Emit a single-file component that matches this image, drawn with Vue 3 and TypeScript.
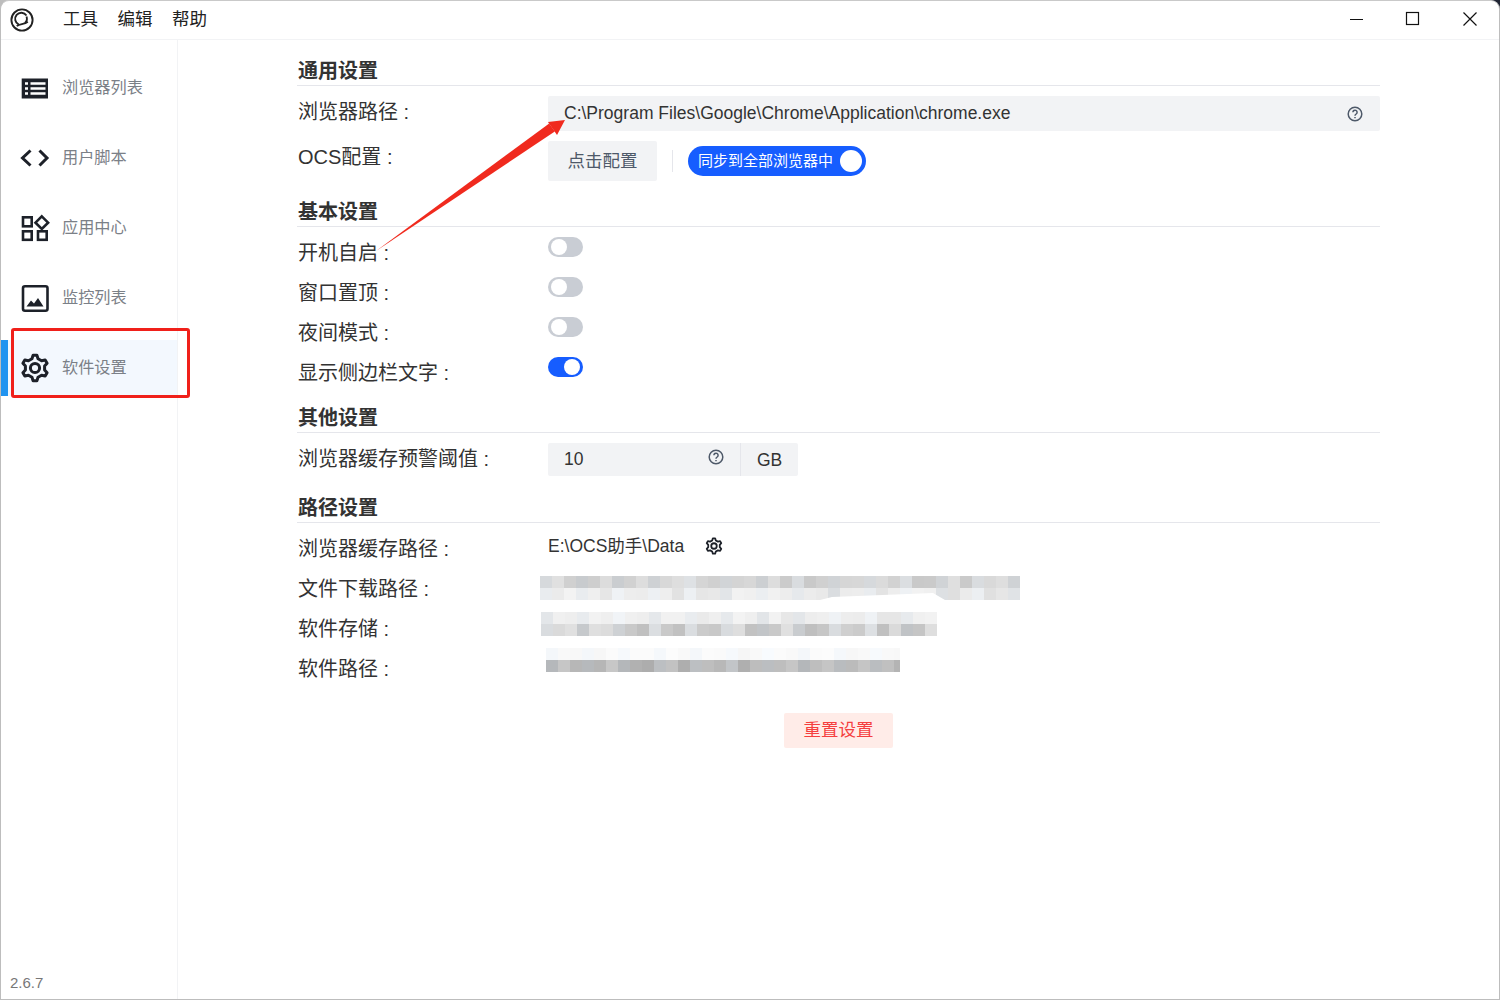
<script setup lang="ts">
function gearPath(cx: number, cy: number, teeth: number, outer: number, inner: number): string {
  const step = (Math.PI * 2) / teeth;
  const pts: string[] = [];
  for (let i = 0; i < teeth; i++) {
    const a = i * step - Math.PI / 2;
    const list: [number, number][] = [
      [inner, a - step * 0.3],
      [outer, a - step * 0.14],
      [outer, a + step * 0.14],
      [inner, a + step * 0.3],
    ];
    for (const [r, t] of list) {
      pts.push(`${(cx + r * Math.cos(t)).toFixed(2)} ${(cy + r * Math.sin(t)).toFixed(2)}`);
    }
  }
  return 'M' + pts.join('L') + 'Z';
}
const gear = gearPath(15, 15, 6, 13, 9.8);

function noiseRow(count: number, seed: number, base: number, range: number): string[] {
  const out: string[] = [];
  let s = seed;
  for (let i = 0; i < count; i++) {
    s = (s * 9301 + 49297) % 233280;
    const v = Math.round(base + (s / 233280 - 0.5) * range);
    const cool = i % 3 === 0 ? 3 : 0;
    out.push(`rgb(${v - cool},${v},${v + cool})`);
  }
  return out;
}

const blur1 = [noiseRow(40, 11, 213, 26), noiseRow(40, 37, 232, 22)];
const blur2 = [noiseRow(33, 73, 236, 16), noiseRow(33, 91, 208, 36)];
const blur3 = [noiseRow(30, 123, 249, 6), noiseRow(30, 157, 185, 28)];

const nav = [
  { label: '浏览器列表', icon: 'list', active: false },
  { label: '用户脚本', icon: 'code', active: false },
  { label: '应用中心', icon: 'apps', active: false },
  { label: '监控列表', icon: 'image', active: false },
  { label: '软件设置', icon: 'gear', active: true },
];
const switches = [
  { label: '开机自启 :', on: false },
  { label: '窗口置顶 :', on: false },
  { label: '夜间模式 :', on: false },
  { label: '显示侧边栏文字 :', on: true },
];
</script>

<template>
  <div class="window">
    <header class="titlebar">
      <svg class="logo" viewBox="0 0 24 24" width="24" height="24" fill="none" stroke="#222" stroke-width="1.900">
        <circle cx="12" cy="12" r="10.600" />
        <path d="M16.500 7.500A6.200 6.200 0 1 0 8.800 16.600" />
        <path d="M16.500 8.500A6 6 0 0 1 15 15" />
        <path d="M6.800 18.200c2.600-2.800 7.200-1.400 11-4.400" />
      </svg>
      <nav class="menu">
        <span>工具</span><span>编辑</span><span>帮助</span>
      </nav>
      <div class="controls">
        <svg width="16" height="16" viewBox="0 0 16 16"><path d="M2 8.500h13" stroke="#111" stroke-width="1" /></svg>
        <svg width="16" height="16" viewBox="0 0 16 16" fill="none"><rect x="1.500" y="1.500" width="12" height="12" stroke="#111" stroke-width="1.200" /></svg>
        <svg width="16" height="16" viewBox="0 0 16 16" fill="none"><path d="M1.500 1.500l13 13M14.500 1.500l-13 13" stroke="#111" stroke-width="1.200" /></svg>
      </div>
    </header>

    <div class="body">
      <aside class="sidebar">
        <div class="nav-list">
          <div v-for="item in nav" :key="item.label" class="nav-item" :class="{ active: item.active }">
            <svg class="nav-icon" viewBox="0 0 30 30" width="30" height="30" fill="none" stroke="#1d2129" stroke-width="2.600">
              <template v-if="item.icon === 'list'">
                <rect x="1.700" y="5.500" width="26.300" height="20" fill="#1d2129" stroke="none" />
                <path d="M5 10.500h3M5 15.500h3M5 20.500h3M10.500 10.500H25.500M10.500 15.500H25.500M10.500 20.500H25.500" stroke="#fff" stroke-width="2.400" />
              </template>
              <template v-else-if="item.icon === 'code'">
                <path d="M10.500 7.500L2.500 15l8 7.500M19.500 7.500L27 15l-7.500 7.500" stroke-width="3" />
              </template>
              <template v-else-if="item.icon === 'apps'">
                <rect x="3" y="4.300" width="8.700" height="9" />
                <rect x="3" y="18.300" width="8.700" height="8.500" />
                <rect x="18" y="18.300" width="8.700" height="8.500" />
                <path d="M21.800 3.400l6.300 6.300-6.300 6.300-6.300-6.300z" />
              </template>
              <template v-else-if="item.icon === 'image'">
                <rect x="3" y="3.300" width="24.500" height="24.500" rx="2" />
                <path d="M6.500 23.500l4.500-6 3 3 4-5.500 5.500 8.500z" fill="#1d2129" stroke="none" />
              </template>
              <template v-else>
                <path :d="gear" stroke-width="3" stroke-linejoin="round" />
                <circle cx="15" cy="15" r="4.600" stroke-width="3" />
              </template>
            </svg>
            <span>{{ item.label }}</span>
          </div>
        </div>
        <div class="version">2.6.7</div>
      </aside>

      <main class="content">
        <h2 class="title first">通用设置</h2>
        <div class="row">
          <label>浏览器路径 :</label>
          <div class="value">
            <div class="input path">
              <span>C:\Program Files\Google\Chrome\Application\chrome.exe</span>
              <svg class="help" viewBox="0 0 16 16" width="16" height="16" fill="none" stroke="#4e5969" stroke-width="1.500">
                <circle cx="8" cy="8" r="6.800" />
                <path d="M5.900 6.300a2.100 2.100 0 1 1 3.300 1.700c-.7.500-1.200.9-1.200 1.700" />
                <path d="M8 11v1.200" />
              </svg>
            </div>
          </div>
        </div>
        <div class="row ocs">
          <label>OCS配置 :</label>
          <div class="value inline">
            <button class="btn">点击配置</button>
            <i class="divider"></i>
            <div class="sync">
              <span>同步到全部浏览器中</span>
              <b class="knob"></b>
            </div>
          </div>
        </div>

        <h2 class="title">基本设置</h2>
        <div v-for="s in switches" :key="s.label" class="row">
          <label>{{ s.label }}</label>
          <div class="value">
            <div class="switch" :class="{ on: s.on }"><b></b></div>
          </div>
        </div>

        <h2 class="title other">其他设置</h2>
        <div class="row">
          <label>浏览器缓存预警阈值 :</label>
          <div class="value">
            <div class="group">
              <div class="input num">
                <span>10</span>
                <svg viewBox="0 0 16 16" width="16" height="16" fill="none" stroke="#4e5969" stroke-width="1.500">
                  <circle cx="8" cy="8" r="6.800" />
                  <path d="M5.900 6.300a2.100 2.100 0 1 1 3.300 1.700c-.7.500-1.200.9-1.200 1.700" />
                  <path d="M8 11v1.200" />
                </svg>
              </div>
              <div class="suffix">GB</div>
            </div>
          </div>
        </div>

        <h2 class="title path-title">路径设置</h2>
        <div class="row">
          <label>浏览器缓存路径 :</label>
          <div class="value inline text">
            <span>E:\OCS助手\Data</span>
            <svg class="small-gear" viewBox="0 0 30 30" width="18" height="18" fill="none" stroke="#1d2129" stroke-width="3">
              <path :d="gear" stroke-linejoin="round" />
              <circle cx="15" cy="15" r="4.600" />
            </svg>
          </div>
        </div>
        <div class="row">
          <label>文件下载路径 :</label>
          <div class="value">
            <div class="blur b1">
              <div v-for="(r, i) in blur1" :key="i" class="blur-row">
                <i v-for="(c, j) in r" :key="j" :style="{ background: c }"></i>
              </div>
            </div>
          </div>
        </div>
        <div class="row">
          <label>软件存储 :</label>
          <div class="value">
            <div class="blur b2">
              <div v-for="(r, i) in blur2" :key="i" class="blur-row">
                <i v-for="(c, j) in r" :key="j" :style="{ background: c }"></i>
              </div>
            </div>
          </div>
        </div>
        <div class="row">
          <label>软件路径 :</label>
          <div class="value">
            <div class="blur b3">
              <div v-for="(r, i) in blur3" :key="i" class="blur-row">
                <i v-for="(c, j) in r" :key="j" :style="{ background: c }"></i>
              </div>
            </div>
          </div>
        </div>

        <div class="footer">
          <button class="reset">重置设置</button>
        </div>
      </main>
    </div>

    <div class="red-box"></div>
    <svg class="arrow" width="200" height="140" viewBox="0 0 200 140">
      <path d="M6 136L184.800 16.500L179.200 8.500Z" fill="#f02a1e" />
      <path d="M195 5L178 7L187 20Z" fill="#f02a1e" />
    </svg>
  </div>
</template>

<style>
html, body { background: linear-gradient(90deg, #bdbdbd 93%, #1f2433 93%); }
</style>

<style scoped>
* { box-sizing: border-box; }
.window {
  position: relative;
  width: 1500px;
  height: 1000px;
  display: flex;
  flex-direction: column;
  background: #fff;
  border: 1px solid #bdbdbd;
  border-top-color: #c9c9c9;
  border-radius: 9px 9px 0 0;
  overflow: hidden;
  font-family: "Liberation Sans", "Noto Sans CJK SC", sans-serif;
  color: #333;
}
.titlebar {
  height: 39px;
  display: flex;
  align-items: center;
  flex: none;
  border-bottom: 1px solid #f2f3f5;
}
.logo { margin-left: 9px; }
.menu {
  display: flex;
  gap: 19.500px;
  margin-left: 29px;
  margin-top: -5px;
  font-size: 17.500px;
  color: #222;
}
.controls {
  margin-left: auto;
  display: flex;
  gap: 41px;
  padding-right: 21px;
  margin-top: -2px;
}
.body { flex: 1; display: flex; min-height: 0; }
.sidebar {
  width: 177px;
  flex: none;
  border-right: 1px solid #f2f3f5;
  display: flex;
  flex-direction: column;
  padding-top: 20px;
}
.nav-list { display: flex; flex-direction: column; gap: 14px; }
.nav-item {
  height: 56px;
  display: flex;
  align-items: center;
  gap: 12px;
  padding-left: 19px;
  font-size: 16.200px;
  color: #7b8087;
}
.nav-item span { padding-bottom: 4px; }
.nav-item.active {
  background: linear-gradient(90deg, #2194f0 7px, #f3f8fe 7px);
}
.nav-icon { flex: none; }
.version {
  margin-top: auto;
  padding: 0 0 8px 9px;
  font-size: 15px;
  color: #777;
}
.content {
  flex: 1;
  padding: 16px 119px 0;
  min-width: 0;
}
.title {
  margin: 16px 0 5px;
  height: 30px;
  line-height: 31px;
  padding-left: 1px;
  border-bottom: 1px solid #e5e6eb;
  font-size: 20px;
  font-weight: 700;
  color: #333;
}
.title.first { margin-top: 0; }
.title.other { margin-top: 11px; }
.title.path-title { margin-top: 15px; }
.row { display: flex; min-height: 40px; }
.row.ocs { margin-top: 5px; }
.row label {
  width: 251px;
  flex: none;
  height: 40px;
  line-height: 42px;
  padding-left: 1px;
  font-size: 20px;
  color: #333;
}
.value { flex: 1; padding-top: 5px; min-width: 0; }
.inline { display: flex; align-items: flex-start; }
.input {
  background: #f2f3f5;
  border-radius: 2px;
  display: flex;
  align-items: center;
  justify-content: space-between;
  font-size: 17.500px;
  color: #333;
}
.path { height: 35px; padding: 0 16px; }
.help { margin-right: 1px; }
.btn {
  height: 40px;
  width: 109px;
  border: 0;
  border-radius: 2px;
  background: #f2f3f5;
  color: #4e5969;
  font: inherit;
  font-size: 17.500px;
  padding: 0 0 4px;
}
.divider {
  width: 1px;
  height: 22px;
  margin: 9px 15px 0;
  background: #e5e6eb;
}
.sync {
  width: 178px;
  height: 30px;
  margin-top: 5px;
  border-radius: 15px;
  background: #165dff;
  color: #fff;
  font-size: 15px;
  display: flex;
  align-items: center;
  justify-content: space-between;
  padding: 0 4px 0 10px;
}
.sync span { padding-bottom: 3px; }
.knob {
  width: 22px;
  height: 22px;
  border-radius: 50%;
  background: #fff;
}
.switch {
  width: 35px;
  height: 20px;
  border-radius: 10px;
  background: #c9cdd4;
  padding: 2px 3px;
}
.switch b {
  display: block;
  width: 16px;
  height: 16px;
  border-radius: 50%;
  background: #fff;
}
.switch.on { background: #165dff; }
.switch.on b { margin-left: auto; }
.group { display: flex; width: 250px; height: 33px; }
.num {
  width: 193px;
  height: 33px;
  padding: 0 16px;
  border-radius: 2px 0 0 2px;
  border-right: 1px solid #e5e6eb;
}
.num svg { margin-top: -6px; }
.suffix {
  flex: 1;
  background: #f2f3f5;
  border-radius: 0 2px 2px 0;
  font-size: 17.500px;
  line-height: 34px;
  padding-left: 16px;
}
.text {
  height: 28px;
  line-height: 28px;
  font-size: 17.500px;
  align-items: center;
  padding-top: 7px;
}
.small-gear { margin-left: 21px; }
.blur { display: flex; flex-direction: column; }
.blur-row { display: flex; height: 12px; }
.blur-row i { display: block; width: 12px; height: 12px; flex: none; }
.b1 {
  margin: 3px 0 0 -8px;
  width: 480px;
  overflow: hidden;
  clip-path: polygon(0 0, 100% 0, 100% 100%, 405px 100%, 393px 17px, 292px 21px, 280px 100%, 0 100%);
}
.b2 { margin: -1px 0 0 -7px; width: 396px; overflow: hidden; }
.b3 { margin: -5px 0 0 -2px; width: 354px; overflow: hidden; }
.footer { display: flex; justify-content: center; padding-top: 25px; }
.reset {
  width: 109px;
  height: 35px;
  border: 0;
  border-radius: 2px;
  background: #ffece8;
  color: #f53f3f;
  font: inherit;
  font-size: 17.500px;
  padding: 0 0 4px;
}
.red-box {
  position: absolute;
  left: 10px;
  top: 327px;
  width: 179px;
  height: 70px;
  border: 3px solid #f0201a;
  border-radius: 3px;
}
.arrow {
  position: absolute;
  left: 369px;
  top: 114px;
}
</style>
